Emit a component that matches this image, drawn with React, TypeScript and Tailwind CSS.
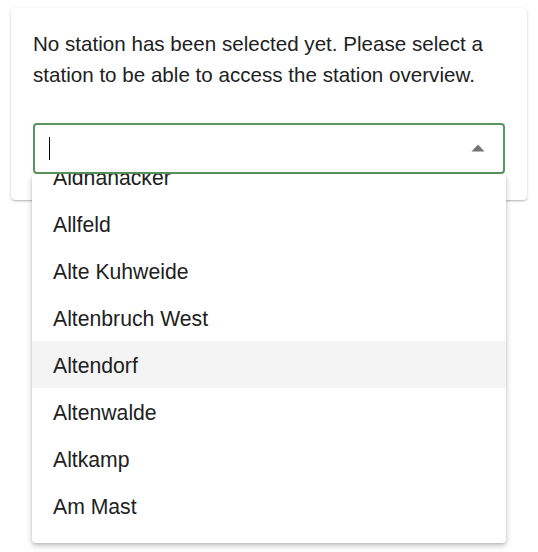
import React from "react";

const stations = [
  "Aldhanacker",
  "Allfeld",
  "Alte Kuhweide",
  "Altenbruch West",
  "Altendorf",
  "Altenwalde",
  "Altkamp",
  "Am Mast",
];

export default function App() {
  return (
    <div className="min-h-[552px] bg-white px-[11px] pt-2 font-['Liberation_Sans',Arial,sans-serif] text-[#212121]">
      <div className="relative rounded bg-white px-[22px] pt-[21px] pb-[26px] shadow-[0_1px_3px_rgba(0,0,0,0.2),0_1px_1px_rgba(0,0,0,0.12)]">
        <p className="text-[20.6px] leading-[30.8px]">
          No station has been selected yet. Please select a station to be able to access the station overview.
        </p>

        {/* Autocomplete input */}
        <div className="relative mt-[32px]">
          <div className="flex h-[51px] items-center rounded border-2 border-[#5a955e] pl-[14px] pr-[18px]">
            <span className="h-[23px] w-px bg-black" />
            <div className="flex-1" />
            <svg width="14" height="8" viewBox="0 0 14 8" className="mb-px">
              <path d="M0.5 7.5 L7 0.5 L13.5 7.5 Z" fill="#757575" />
            </svg>
          </div>

          {/* Options popup */}
          <div className="absolute left-[-1px] right-[-1px] top-[51px] z-10 h-[369px] overflow-hidden rounded bg-white shadow-[0_3px_6px_rgba(0,0,0,0.2),0_1px_3px_rgba(0,0,0,0.14)]">
            <ul className="-mt-[21px]">
              {stations.map((s) => (
                <li
                  key={s}
                  className={
                    "flex h-[47px] items-center pl-[21px] pt-[3px] text-[21.2px] " +
                    (s === "Altendorf" ? "bg-[#f4f4f4]" : "")
                  }
                >
                  {s}
                </li>
              ))}
            </ul>
          </div>
        </div>
      </div>
    </div>
  );
}
